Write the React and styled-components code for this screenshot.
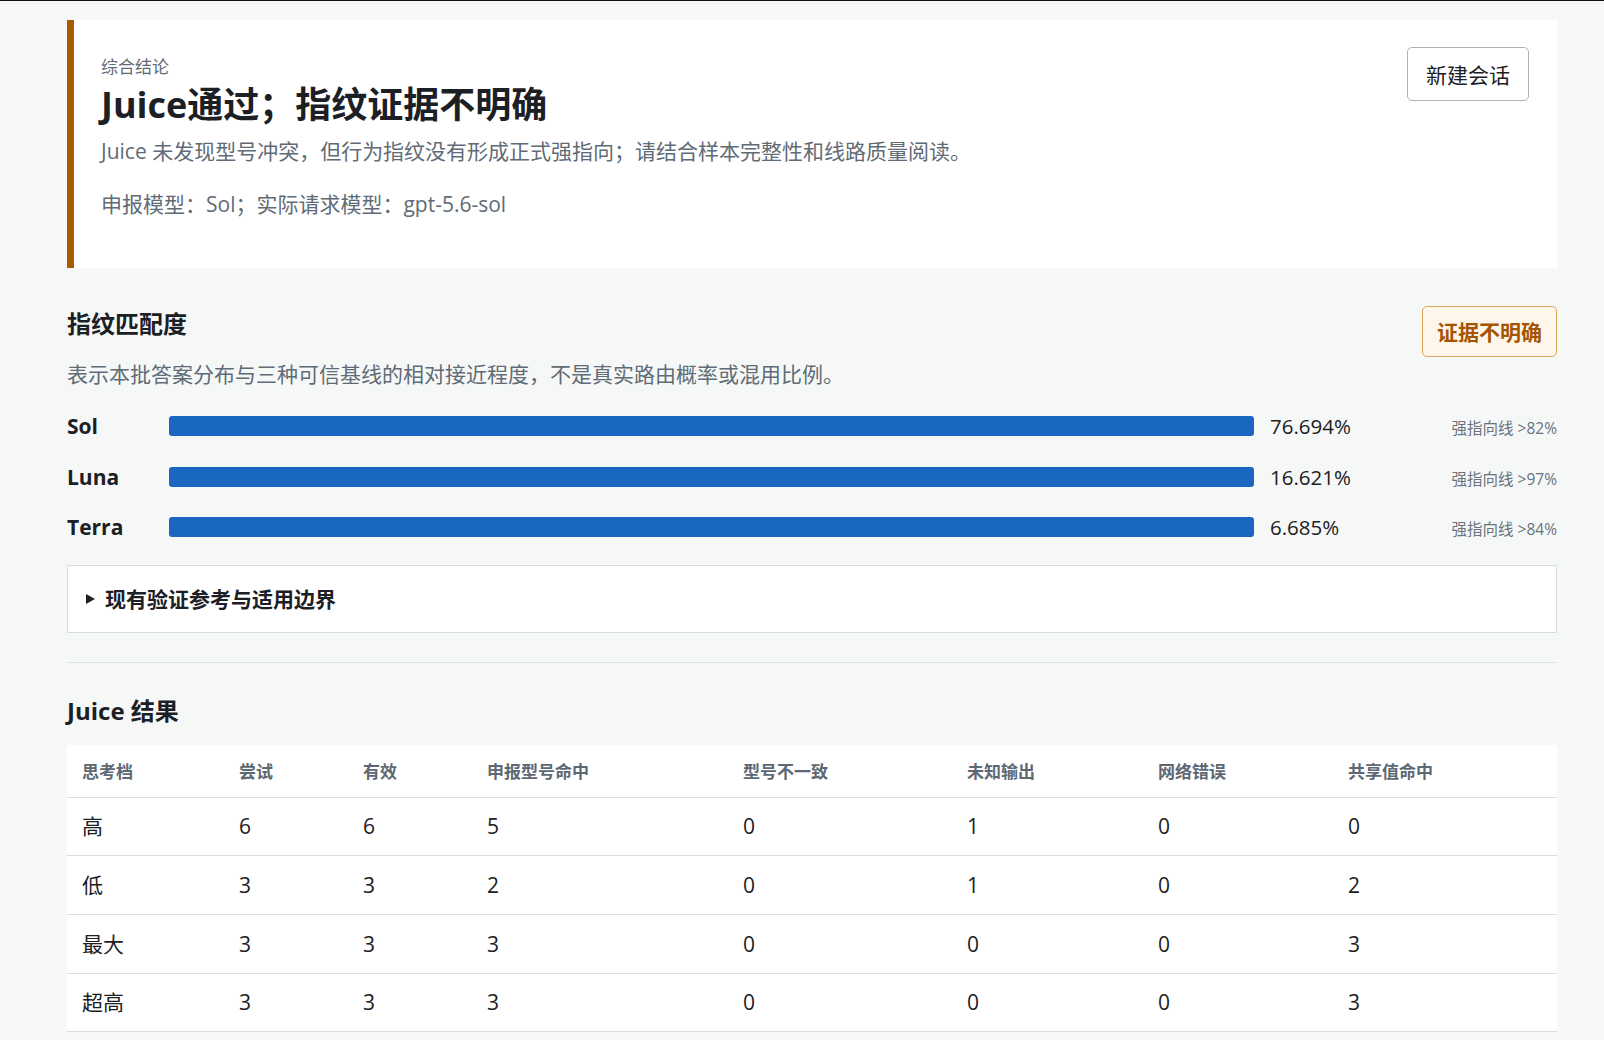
import React from "react";
import styled, { createGlobalStyle } from "styled-components";

const GlobalStyle = createGlobalStyle`
  * { box-sizing: border-box; }
  body {
    margin: 0;
    border-top: 1px solid #111;
    background: #f6f8f7;
    font-family: "Open Sans", "Noto Sans CJK SC", sans-serif;
    color: #1c2024;
  }
`;

const Page = styled.main`
  width: 1490px;
  margin-left: 67px;
  padding-top: 19px;
`;

const Summary = styled.section`
  display: flex;
  justify-content: space-between;
  align-items: flex-start;
  background: #fff;
  border-left: 7px solid #a65b00;
  padding: 27px 28px 27px 27px;
`;

const SummaryBody = styled.div`
  padding-top: 7px;
`;

const Eyebrow = styled.div`
  font-size: 17px;
  line-height: 25px;
  color: #5f6b76;
`;

const Title = styled.h1`
  margin: 4px 0 0;
  font-size: 36px;
  line-height: 44px;
  font-weight: 700;
  color: #1c2024;
`;

const Lead = styled.p`
  margin: ${(p) => p.$top || 0}px 0 ${(p) => p.$bottom || 0}px;
  font-size: 21px;
  line-height: 32px;
  color: #5f6b76;
`;

const OutlineButton = styled.button`
  font: inherit;
  font-size: 21px;
  line-height: 32px;
  height: 54px;
  padding: 2px 18px 0;
  background: #fff;
  color: #1c2024;
  border: 1px solid #a9b1b9;
  border-radius: 5px;
`;

const Section = styled.section`
  margin-top: 38px;
`;

const HeadRow = styled.div`
  display: flex;
  justify-content: space-between;
  align-items: flex-start;
`;

const Heading = styled.h2`
  margin: ${(p) => p.$top || 0}px 0 0;
  font-size: 24px;
  line-height: 36px;
  font-weight: 700;
  color: #1c2024;
`;

const Badge = styled.span`
  display: inline-block;
  height: 51px;
  padding: 0 14px;
  font-size: 21px;
  line-height: 51px;
  font-weight: 700;
  color: #a65400;
  background: #fff6eb;
  border: 1px solid #dfa35c;
  border-radius: 5px;
`;

const Bars = styled.div`
  display: grid;
  grid-template-columns: 86px 1fr 150px 121px;
  grid-auto-rows: 30px;
  column-gap: 16px;
  row-gap: 20.5px;
  align-items: center;
  margin-top: 21px;
`;

const BarLabel = styled.div`
  font-size: 21px;
  line-height: 30px;
  font-weight: 700;
`;

const Bar = styled.div`
  height: 20px;
  border-radius: 3px;
  background: #1967c0;
`;

const Percent = styled.div`
  font-size: 20.5px;
  line-height: 30px;
  color: #1c2024;
`;

const Threshold = styled.div`
  text-align: right;
  font-size: 15.5px;
  line-height: 26px;
  padding-top: 4px;
  color: #68737e;
  white-space: nowrap;
`;

const Disclosure = styled.details`
  margin-top: 23px;
  background: #fff;
  border: 1px solid #d7dce0;
`;

const DisclosureSummary = styled.summary`
  list-style: none;
  display: flex;
  align-items: center;
  padding: 17px 18px;
  font-size: 21px;
  line-height: 32px;
  font-weight: 700;
  cursor: pointer;
  &::-webkit-details-marker { display: none; }
  &::before {
    content: "";
    border-left: 9px solid #1c2024;
    border-top: 5px solid transparent;
    border-bottom: 5px solid transparent;
    margin-right: 10px;
  }
`;

const Divider = styled.hr`
  margin: 29px 0 0;
  border: 0;
  border-top: 1px solid #dde1e3;
`;

const Table = styled.table`
  margin-top: 16px;
  width: 100%;
  table-layout: fixed;
  border-collapse: collapse;
  background: #fff;
`;

const Th = styled.th`
  height: 52px;
  padding: 0 15px;
  text-align: left;
  font-size: 17px;
  font-weight: 700;
  color: #5d6873;
  border-bottom: 1px solid #d9dde0;
`;

const Td = styled.td`
  height: 58.7px;
  padding: 0 15px;
  font-size: 21px;
  line-height: 32px;
  color: #1c2024;
  border-bottom: 1px solid #d9dde0;
`;

const bars = [
  { name: "Sol", pct: "76.694%", line: "82%" },
  { name: "Luna", pct: "16.621%", line: "97%" },
  { name: "Terra", pct: "6.685%", line: "84%" },
];

const columns = [
  { title: "思考档", width: 157 },
  { title: "尝试", width: 124 },
  { title: "有效", width: 124 },
  { title: "申报型号命中", width: 256 },
  { title: "型号不一致", width: 224 },
  { title: "未知输出", width: 191 },
  { title: "网络错误", width: 190 },
  { title: "共享值命中", width: 224 },
];

const rows = [
  ["高", 6, 6, 5, 0, 1, 0, 0],
  ["低", 3, 3, 2, 0, 1, 0, 2],
  ["最大", 3, 3, 3, 0, 0, 0, 3],
  ["超高", 3, 3, 3, 0, 0, 0, 3],
];

export default function App() {
  return (
    <>
      <GlobalStyle />
      <Page>
        <Summary>
          <SummaryBody>
            <Eyebrow>综合结论</Eyebrow>
            <Title>Juice通过；指纹证据不明确</Title>
            <Lead $top={8}>
              Juice 未发现型号冲突，但行为指纹没有形成正式强指向；请结合样本完整性和线路质量阅读。
            </Lead>
            <Lead $top={21} $bottom={21}>
              申报模型：Sol；实际请求模型：gpt-5.6-sol
            </Lead>
          </SummaryBody>
          <OutlineButton>新建会话</OutlineButton>
        </Summary>

        <Section>
          <HeadRow>
            <Heading>指纹匹配度</Heading>
            <Badge>证据不明确</Badge>
          </HeadRow>
          <Lead $top={1}>
            表示本批答案分布与三种可信基线的相对接近程度，不是真实路由概率或混用比例。
          </Lead>
          <Bars>
            {bars.map((b) => (
              <React.Fragment key={b.name}>
                <BarLabel>{b.name}</BarLabel>
                <Bar />
                <Percent>{b.pct}</Percent>
                <Threshold>强指向线 &gt;{b.line}</Threshold>
              </React.Fragment>
            ))}
          </Bars>
          <Disclosure>
            <DisclosureSummary>现有验证参考与适用边界</DisclosureSummary>
          </Disclosure>
          <Divider />
          <Heading $top={30}>Juice 结果</Heading>
          <Table>
            <colgroup>
              {columns.map((c) => (
                <col key={c.title} style={{ width: c.width }} />
              ))}
            </colgroup>
            <thead>
              <tr>
                {columns.map((c) => (
                  <Th key={c.title}>{c.title}</Th>
                ))}
              </tr>
            </thead>
            <tbody>
              {rows.map((r) => (
                <tr key={r[0]}>
                  {r.map((v, i) => (
                    <Td key={i}>{v}</Td>
                  ))}
                </tr>
              ))}
            </tbody>
          </Table>
        </Section>
      </Page>
    </>
  );
}
